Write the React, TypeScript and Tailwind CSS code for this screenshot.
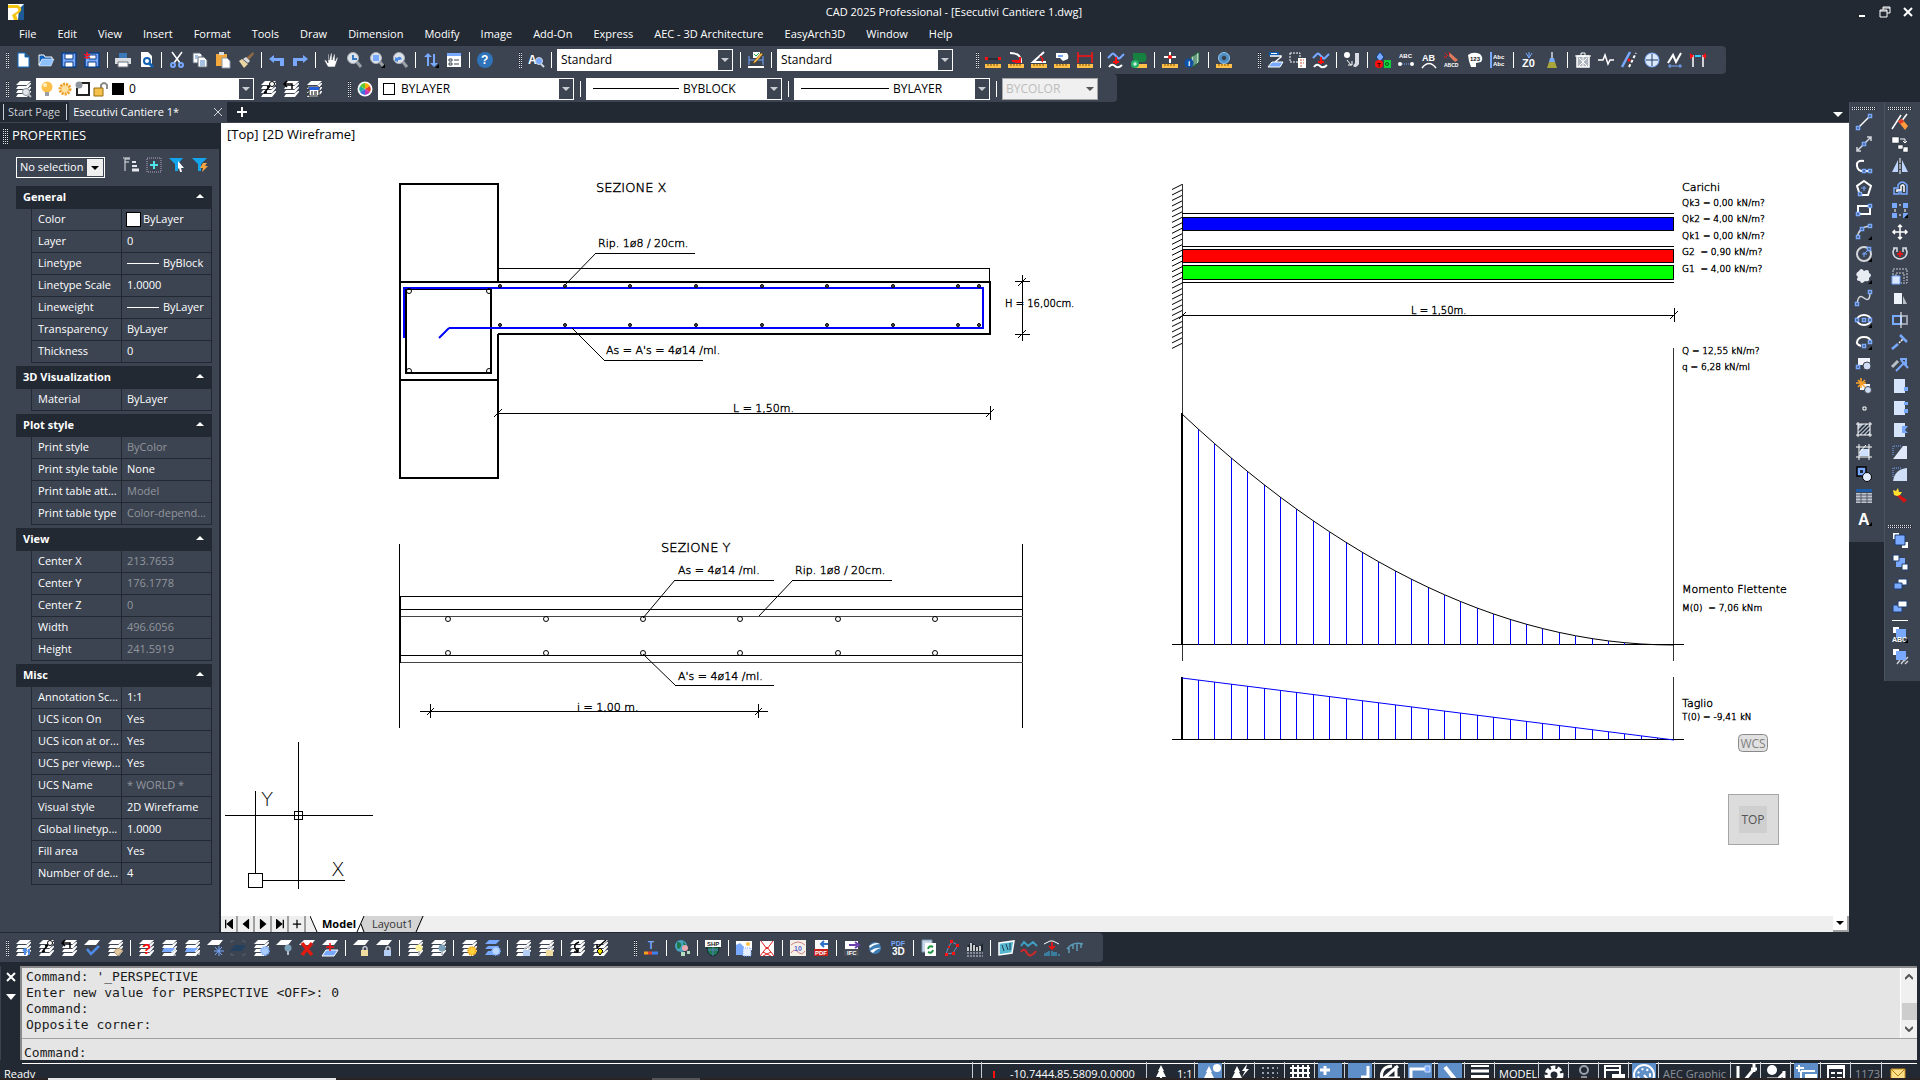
import React, { ReactNode } from "react";

const W = "#ffffff";
const B = "#78a9ff";
const Y = "#ffc04a";
const R = "#ff1010";

const ruler = (
  <>
    <path d="M0 12h16v4H0z" fill={Y} />
    <path d="M3 12v2M6 12v2M9 12v2M12 12v2" stroke="#7a5200" />
  </>
);

// stacked sheets, the base of all layer icons
const sheets = (
  <g fill={W}>
    <path d="M5 0h11l-4 4H1z" />
    <path d="M1 8l2-3h8l4-3h1v1l-4 5z" />
    <path d="M1 12l2-3h8l4-3h1v1l-4 5z" />
    <path d="M1 16l2-3h8l4-3h1v1l-4 5z" />
  </g>
);

const sheet = <path d="M5 0h11l-4 5H0z" fill={W} />;

const wave = (
  <>
    <path d="M0 6l4-4q1-1 2 0l4 4q1 1 2 0l4-4" stroke={B} strokeWidth="2" fill="none" />
    <path d="M1 15q3-4 6-1t7-1" stroke={W} strokeWidth="2" fill="none" />
    <path d="M8 5v7M5 10h6" stroke={R} strokeWidth="2" />
  </>
);

const lens = (
  <>
    <circle cx="7" cy="6" r="5.5" fill="#dfe4ea" stroke="#a9b0b8" />
    <path d="M11 10l4 5" stroke="#9aa0a6" strokeWidth="3" />
  </>
);

const bulb = (color: string) => (
  <>
    <circle cx="12" cy="8" r="3.5" fill={color} />
    <path d="M11 11h2v4h-2z" fill="#b8bec6" />
  </>
);

const lock = (color: string) => (
  <>
    <path d="M10 10V8q2-3 4 0v2" stroke="#c9ced6" strokeWidth="1.5" fill="none" />
    <path d="M8 10h7v6H8z" fill={color} />
  </>
);

const node = (x: number, y: number) => (
  <path d={`M${x - 1.5} ${y - 1.5}h3v3h-3z`} fill="#3c4452" stroke={B} strokeWidth="1.5" />
);

const more = <path d="M16 12v4h-4z" fill="#000" />;

const tiny = (text: string, x: number, y: number, fill = W, size = 7) => (
  <text x={x} y={y} fill={fill} fontSize={size} fontWeight="700" fontFamily="Liberation Sans, sans-serif">
    {text}
  </text>
);

const glyphs: Record<string, ReactNode> = {
  new: <path d="M3 1h7l4 4v10H3z M10 1v4h4" fill={W} stroke="#0f6cc4" />,
  open: (
    <>
      <path d="M1 3h5l1 2h7v3H4L1 13z" fill="#0f5fb8" stroke={W} />
      <path d="M4 7h12l-3 7H1z" fill="#8cc0ff" stroke={W} strokeWidth=".5" />
    </>
  ),
  save: (
    <>
      <path d="M1 1h14v14H1z" fill={B} stroke="#0c3f86" strokeWidth="1.5" />
      <path d="M4 2h8v5H4zM4 10h8v5H4z" fill={W} stroke="#0c3f86" />
    </>
  ),
  saveAs: (
    <>
      <path d="M1 1h14v14H1z" fill={B} stroke="#0c3f86" strokeWidth="1.5" />
      <path d="M5 3h7v4H5zM4 10h8v5H4z" fill={W} stroke="#0c3f86" />
      <path d="M3 0v7M0 2l6 4M6 2L0 6" stroke={R} strokeWidth="1.5" />
    </>
  ),
  print: (
    <>
      <path d="M4 1h8v5H4z" fill="#3b78b8" />
      <path d="M0 6h16v6H0z" fill="#d9dde2" />
      <path d="M3 10h10v5H3z" fill="#ffffff" stroke="#6c737c" />
    </>
  ),
  preview: (
    <>
      <path d="M3 0h7l4 4v11H3z" fill={W} />
      <circle cx="9" cy="9" r="3" fill="none" stroke="#1361b0" strokeWidth="2" />
      <path d="M11 11l4 4" stroke="#1361b0" strokeWidth="3" />
    </>
  ),
  cut: (
    <>
      <path d="M3 0l8 11M13 0L5 11" stroke={W} strokeWidth="1.5" />
      <circle cx="4" cy="13" r="2" fill="none" stroke={B} strokeWidth="2" />
      <circle cx="12" cy="13" r="2" fill="none" stroke={B} strokeWidth="2" />
    </>
  ),
  copy: (
    <>
      <path d="M1 1h7l2 2v8H1z" fill={W} stroke="#5c6675" />
      <path d="M6 5h6l3 3v7H6z" fill={W} stroke="#5c6675" />
      <path d="M8 9h5M8 11h5M8 13h5M3 4h3M3 6h2" stroke="#4b83c4" />
    </>
  ),
  paste: (
    <>
      <path d="M1 2h11v12H1z" fill="#f2a83b" />
      <path d="M4 0h5v3H4z" fill="#d8dce2" />
      <path d="M7 6h5l3 3v7H7z" fill={W} stroke="#8b97a8" />
    </>
  ),
  brush: (
    <>
      <path d="M15 0l1 2-5 6-3-2z" fill="#8f6a45" />
      <path d="M8 5l4 4-2 2-5-4z" fill="#d9dde2" />
      <path d="M4 7l6 5-4 4-5-7z" fill="#e8d3a2" />
    </>
  ),
  undo: <path d="M5 3L0 7l5 4V9h6v5h4V6H5z" fill={B} />,
  redo: <path d="M11 3l5 4-5 4V9H5v5H1V6h10z" fill={B} />,
  pan: <path d="M5 15L1 8l2 0 2 3V2h1v6L8 1h1v7l2-6h1v7l2-4 1 1-3 9z" fill={W} stroke="#39414d" strokeWidth=".6" />,
  zoom: (
    <>
      {lens}
      <path d="M7 3v4h4" stroke="#3578c4" strokeWidth="2" fill="none" />
    </>
  ),
  zoomWindow: (
    <>
      {lens}
      <path d="M4 3h6v6H4z" fill={B} />
      {more}
    </>
  ),
  zoomPrevious: (
    <>
      {lens}
      <path d="M3 9V5l2 1q3-3 5 1l-2 1-2 0 0 2z" fill="#4d8be6" />
    </>
  ),
  regen: (
    <>
      <path d="M5 1L1 5h3v9h2V5h3zM11 15l4-4h-3V2h-2v9H7z" fill={B} />
      {more}
    </>
  ),
  properties: (
    <>
      <path d="M1 1h14v14H1z" fill={W} />
      <path d="M1 1h14v3H1z" fill={B} />
      <path d="M3 7h3v2H3zM3 11h3v2H3zM8 8h5M8 12h5" stroke="#3c4452" fill="none" />
    </>
  ),
  help: (
    <>
      <circle cx="8" cy="8" r="8" fill="#2f73b8" />
      {tiny("?", 4, 12, W, 12)}
    </>
  ),
  textStyle: (
    <>
      {tiny("A", 0, 12, W, 12)}
      <circle cx="11" cy="9" r="3.5" fill={B} stroke="#cdd6e2" />
      <path d="M13 12l3 3" stroke="#cdd6e2" strokeWidth="2" />
    </>
  ),
  dimStyle: (
    <>
      <path d="M1 4v9M15 4v9M1 8h14" stroke={B} />
      <path d="M0 14h16v2H0z" fill={W} />
      <path d="M5 0h7v6H5z" fill={W} />
      <path d="M6 2l2 2 3-3" stroke="#12a84a" fill="none" />
      <path d="M15 2L8 10l-3 2 1-3 7-8z" fill={Y} stroke="#583400" strokeWidth=".5" />
    </>
  ),
  distance: (
    <>
      {ruler}
      <path d="M2 7h12" stroke="#161b22" />
      <path d="M0 5h3v3H0zM13 5h3v3h-3z" fill={R} />
    </>
  ),
  radius: (
    <>
      {ruler}
      <path d="M2 1q12 0 11 10" stroke={W} strokeWidth="2" fill="none" />
      <path d="M4 9h8M12 5v5H7" stroke={R} strokeWidth="2" fill="none" />
    </>
  ),
  angle: (
    <>
      {ruler}
      <path d="M13 0L2 10h13" stroke={W} strokeWidth="2" fill="none" />
      <path d="M9 4q4 3 2 6" stroke={R} strokeWidth="1.5" fill="none" />
    </>
  ),
  area: (
    <>
      {ruler}
      <path d="M2 1h11q2 2 1 6l-5 2-3-3H2z" fill={W} />
      <path d="M4 3h5v2H4z" fill={B} />
    </>
  ),
  extent: (
    <>
      {ruler}
      <path d="M1 0v11M15 0v11M1 4h14" stroke={R} strokeWidth="1.5" />
    </>
  ),
  wave,
  addArea: (
    <>
      <path d="M2 1h12q3 6 0 9H8L2 7z" fill="#17823f" />
      <path d="M4 12h12v4H4z" fill={Y} />
      <circle cx="4" cy="12" r="4" fill="#23b26a" />
      <path d="M4 10v4M2 12h4" stroke={W} />
    </>
  ),
  idPoint: (
    <>
      {ruler}
      <path d="M8 0v11M2 5h12" stroke={W} strokeWidth="2" />
      <circle cx="8" cy="5" r="2" fill={R} />
    </>
  ),
  massInfo: (
    <>
      <path d="M9 3l5-3v10l-5 5zM6 5l5-3v10l-4 3z" fill="#b9d9c6" stroke="#20603a" />
      <circle cx="4" cy="11" r="4.5" fill="#0d50a8" />
      {tiny("i", 3, 14, W, 8)}
    </>
  ),
  measure: (
    <>
      {ruler}
      <circle cx="8" cy="6" r="4" fill="none" stroke="#4f8fc4" strokeWidth="3.5" />
      <circle cx="8" cy="6" r="5.5" fill="none" stroke="#8fc2ea" />
    </>
  ),
  flatten: (
    <>
      <path d="M2 0h10v4H2z" fill="#0b5bb0" />
      <path d="M3 4h11v1L8 10" stroke={W} strokeWidth="1.5" fill="none" />
      <path d="M4 1h6v1H4z" fill={W} />
      <path d="M5 10h11l-3 5H1z" fill={B} stroke={W} />
    </>
  ),
  select: (
    <>
      <path d="M0 1h10v9H0z" fill="none" stroke={W} strokeDasharray="2 1" />
      <path d="M8 6h8v10H8z" fill={W} />
      <path d="M10 8h4M10 11h4M10 14h3" stroke="#d05a30" strokeDasharray="2 1" />
    </>
  ),
  move2: (
    <>
      <circle cx="3" cy="3" r="3" fill={W} />
      <path d="M3 8l4 5M4 13h4V9" stroke={W} fill="none" />
      <path d="M11 1h4v11q-3 5-6 2l2-3z" fill="#d8dce2" />
    </>
  ),
  blocks: (
    <>
      <path d="M5 0l4 5-4 5-4-5z" fill={B} stroke="#0c3f86" />
      <circle cx="4" cy="12" r="4" fill={R} />
      <path d="M9 8h7v8H9z" fill="#0fd03c" />
      {tiny("T", 2, 15, "#300", 6)}
      <circle cx="12" cy="12" r="1.5" fill="none" stroke="#052" />
    </>
  ),
  textFit: (
    <>
      {tiny("ABC", 1, 6, W, 6)}
      <circle cx="2" cy="12" r="2" fill={W} />
      <circle cx="14" cy="12" r="2" fill={W} />
      <path d="M4 12h8" stroke={B} strokeDasharray="1 1" />
    </>
  ),
  arcText: (
    <>
      {tiny("AB", 1, 9, W, 9)}
      <path d="M1 16q7-9 14 0" stroke={W} strokeWidth="1.5" fill="none" />
    </>
  ),
  explodeText: (
    <>
      <path d="M1 1l3 3M5 0l1 3M0 5h3" stroke={R} />
      <path d="M6 1l8 7-3 2-6-6z" fill="#e07a5c" />
      {tiny("ABCD", 0, 15, W, 5)}
    </>
  ),
  mask: (
    <>
      <path d="M1 3q5-4 12-1 4 4 1 8l-5 1v4H4L2 9z" fill={W} />
      {tiny("123", 3, 9, "#111", 6)}
    </>
  ),
  alignText: (
    <>
      <path d="M1 0v16" stroke={B} strokeWidth="2" />
      {tiny("Abc", 3, 7, W, 6)}
      {tiny("Abc", 3, 14, W, 6)}
    </>
  ),
  z0: (
    <>
      <path d="M8 0v6M5 1l3 5 3-5" stroke={B} fill="none" />
      {tiny("Z0", 1, 15, W, 11)}
    </>
  ),
  clean: (
    <>
      <path d="M8 0v6" stroke="#d8dce2" strokeWidth="1.5" />
      <path d="M6 6h4l1 4H5z" fill={B} />
      <path d="M5 10h6l2 6H3z" fill="#a8a63a" />
    </>
  ),
  purge: (
    <>
      <path d="M2 4h12v11H2z" fill="#aeb4bc" stroke={W} strokeWidth="1.5" />
      <path d="M0 4h16M6 1h4v3H6zM4 6l8 8M12 6l-8 8M8 5v10" stroke={W} fill="none" />
    </>
  ),
  breakLine: <path d="M0 8h5l2-5 3 9 2-4h4" stroke={W} strokeWidth="1.5" fill="none" />,
  parallel: (
    <>
      <path d="M1 15L9 0" stroke={B} strokeWidth="2.5" />
      <path d="M8 15l7-14" stroke={W} strokeWidth="2" strokeDasharray="3 2" />
      <circle cx="8" cy="8" r="1.5" fill={R} />
    </>
  ),
  target: (
    <>
      <circle cx="8" cy="8" r="7" fill="#dce9fb" stroke={B} />
      <path d="M8 2v12M2 8h12" stroke="#1d3a66" />
    </>
  ),
  polyEdit: (
    <>
      <path d="M1 11l5-8 3 7 5-9" stroke={W} strokeWidth="2" fill="none" />
      <path d="M1 14h14M3 12v4M13 12v4" stroke={B} />
    </>
  ),
  interval: (
    <>
      <path d="M3 3v12M13 3v12" stroke={W} strokeWidth="1.5" />
      <path d="M5 4h6" stroke="#35c9ff" strokeWidth="2" />
      <path d="M0 1l4 3-4 3zM16 1l-4 3 4 3z" fill={R} />
    </>
  ),
  layerList: (
    <>
      {sheets}
      <circle cx="11" cy="11" r="3.5" fill="#e3e7ec" stroke="#8b929c" />
      <path d="M13 13l3 3" stroke="#b9bfc8" strokeWidth="2" />
    </>
  ),
  layerMake: (
    <>
      {sheets}
      <path d="M4 12L10 5M10 5l-3 1M4 12l3-1" stroke="#000" strokeWidth="1.5" />
      <circle cx="12" cy="3" r="2.5" fill={W} stroke="#000" />
    </>
  ),
  layerPrev: (
    <>
      {sheets}
      <path d="M1 3h8v5M4 0L1 3l3 3" stroke="#000" strokeWidth="1.5" fill="none" />
    </>
  ),
  layerState: (
    <>
      {sheets}
      <path d="M3 6h10v9H3z" fill={W} stroke="#000" />
      <path d="M3 6h10v3H3z" fill="#245edb" />
      <path d="M5 11h2M8 11h3M5 13h2M8 13h3" stroke="#000" />
    </>
  ),
  colorWheel: (
    <>
      <circle cx="8" cy="8" r="7.5" fill={W} />
      <path d="M8 8V2a6 6 0 0 1 5 3z" fill="#ffb000" />
      <path d="M8 8l5-3a6 6 0 0 1 0 6z" fill="#e43b2c" />
      <path d="M8 8l5 3a6 6 0 0 1-5 3z" fill="#c238b8" />
      <path d="M8 8v6a6 6 0 0 1-5-3z" fill="#3f6fe0" />
      <path d="M8 8l-5 3a6 6 0 0 1 0-6z" fill="#21b0a0" />
      <path d="M8 8L3 5a6 6 0 0 1 5-3z" fill="#65c631" />
    </>
  ),
  layerFilter: (
    <>
      {sheets}
      <path d="M10 9v6M14 9v6M8 11l2-2 2 2" stroke="#4d8be6" strokeWidth="2" fill="none" />
    </>
  ),
  layerCheck: (
    <>
      {sheet}
      <path d="M3 9l4 5 8-8" stroke="#4d8be6" strokeWidth="2.5" fill="none" />
    </>
  ),
  layerMatch: (
    <>
      {sheets}
      <path d="M10 8l6 2-5 6-4-4z" fill="#e3c9a0" stroke="#7a5c34" strokeWidth=".6" />
    </>
  ),
  layerWhat: (
    <>
      {sheets}
      {tiny("?", 4, 14, R, 15)}
    </>
  ),
  layerIn: (
    <>
      {sheets}
      <path d="M3 8h11l-3 4H1z" fill={B} />
      <path d="M15 9l-4 5M11 11v4h4" stroke={W} fill="none" />
    </>
  ),
  layerOut: (
    <>
      {sheets}
      <path d="M3 8h11l-3 4H1z" fill={B} />
      <path d="M10 16l5-5M11 11h4v4" stroke={W} fill="none" />
    </>
  ),
  layerFreeze: (
    <>
      {sheet}
      <path d="M12 6v10M7 11h10M8 7l7 8M15 7l-7 8" stroke={B} />
    </>
  ),
  layerDim: (
    <>
      <path d="M1 3V1h3M15 3V1h-3M1 13v2h3M15 13v2h-3" stroke="#59616e" fill="none" />
      <path d="M5 5h11l-4 6H0z" fill="#24405f" />
    </>
  ),
  layerThaw: (
    <>
      {sheets}
      <circle cx="12" cy="11" r="4" fill="#a8ccff" stroke={B} strokeDasharray="1 1" strokeWidth="2" />
    </>
  ),
  layerOff: (
    <>
      {sheet}
      {bulb("#7ba2b8")}
    </>
  ),
  layerDelete: (
    <>
      {sheet}
      <path d="M3 3l10 12M13 3L3 15" stroke="#e01b10" strokeWidth="3.5" />
    </>
  ),
  layerMerge: (
    <>
      {sheet}
      <path d="M4 10h12l-4 6H0z" fill={B} stroke={W} />
      <path d="M8 3v8M4 7h8" stroke={R} strokeWidth="1.5" />
    </>
  ),
  layerLock: (
    <>
      {sheet}
      {lock("#f0dca0")}
    </>
  ),
  layerUnlock: (
    <>
      {sheet}
      {lock("#b4cdf5")}
    </>
  ),
  layersOn: (
    <>
      {sheets}
      {bulb("#fff3a0")}
    </>
  ),
  layersOff: (
    <>
      {sheets}
      {bulb("#7ba2b8")}
    </>
  ),
  layersSun: (
    <>
      {sheets}
      <circle cx="11" cy="11" r="4" fill="#ffd23c" stroke="#f39c12" strokeDasharray="1 1" strokeWidth="2" />
    </>
  ),
  layersIce: (
    <>
      <g fill={B}>
        <path d="M5 0h11l-4 4H1z" />
        <path d="M4 6h11l-3 3H1zM4 11h11l-3 4H1z" />
      </g>
      <circle cx="12" cy="11" r="4" fill="#bcd8ff" stroke={B} strokeDasharray="1 1" strokeWidth="2" />
    </>
  ),
  layersUnlock: (
    <>
      {sheets}
      {lock("#b4cdf5")}
    </>
  ),
  layersLock: (
    <>
      {sheets}
      {lock("#f0dca0")}
    </>
  ),
  layerUndo: (
    <>
      {sheets}
      <path d="M10 2q-8 3-1 10M9 12V8M9 12H5" stroke="#000" strokeWidth="1.5" fill="none" />
    </>
  ),
  layerWalk: (
    <>
      {sheets}
      <path d="M14 0L5 8M5 8V4" stroke="#000" strokeWidth="1.5" />
      <path d="M8 8l3 3-3 4-3-4z" fill="#f4e400" stroke="#000" />
    </>
  ),
  titleBlock: (
    <>
      {tiny("T", 5, 9, B, 10)}
      <path d="M1 13h4" stroke="#ff9d1c" strokeWidth="3" />
      <path d="M5 13h4" stroke="#e04030" strokeWidth="3" />
      <path d="M9 13h6" stroke="#3f7ff0" strokeWidth="3" />
    </>
  ),
  globe: (
    <>
      <circle cx="7" cy="6" r="6" fill="#4aa3c0" />
      <path d="M3 2q5 0 4 4t-4 2zM9 1l3 4-2 3z" fill="#1c7a4d" />
      <circle cx="11" cy="8" r="3" fill="#eba9b0" />
      <path d="M7 12h4v4H7zM13 11h3v3h-3z" fill="#b7ddc0" />
    </>
  ),
  shp: (
    <>
      <path d="M2 7h12q0 8-6 9-6-1-6-9z" fill="#1f7d55" stroke="#10262c" />
      <path d="M0 0h16v7H0z" fill={W} />
      {tiny("SHP", 2, 6, "#222", 6)}
      <path d="M3 10h10M8 7v9" stroke="#5a7cc0" />
    </>
  ),
  image: (
    <>
      <path d="M0 1h16v9H0z" fill={W} />
      <path d="M0 5l4-2 4 4v8H0z" fill={B} />
      <circle cx="12" cy="4" r="2" fill={Y} />
      <path d="M7 8h8v8H7z" fill="#e7f0ff" stroke={B} strokeDasharray="1 1" />
    </>
  ),
  clip: (
    <>
      <path d="M1 1h14v15H1z" fill={W} />
      <path d="M2 1l6 8 6-8M1 16l7-9 7 9M4 12l8 4M12 12l-8 4" stroke="#e02020" fill="none" />
    </>
  ),
  contour: (
    <>
      <path d="M0 0h16v16H0z" fill="#f4efe8" />
      <path d="M1 5q7-6 14 0M1 13q3-5 7-1t7-1" stroke="#d08080" fill="none" />
      {tiny("10", 4, 11, "#5a68d0", 7)}
    </>
  ),
  pdf: (
    <>
      <path d="M2 0h13v16H2z" fill={W} />
      <path d="M1 9h14v7H1z" fill="#c8201c" />
      {tiny("PDF", 2, 15, W, 6)}
      <path d="M15 4H9M11 1L8 4l3 3" stroke="#2d70c8" strokeWidth="2" fill="none" />
    </>
  ),
  ifc: (
    <>
      <path d="M1 1h13v15H1z" fill={W} />
      <path d="M0 9h15v7H0z" fill="#4a4f57" />
      {tiny("IFC", 3, 15, W, 6)}
      <path d="M5 5h8M11 2l4 3-4 3" stroke="#6d3fae" strokeWidth="2" fill="none" />
    </>
  ),
  earth: (
    <>
      <circle cx="8" cy="8" r="6" fill="#3d7db5" />
      <path d="M2 6q6-5 11-2-6 0-10 4zM3 11q6-4 11-3-5 1-8 5z" fill={W} />
    </>
  ),
  pdf3d: (
    <>
      {tiny("PDF", 1, 6, B, 7)}
      {tiny("3D", 2, 15, W, 10)}
    </>
  ),
  refresh: (
    <>
      <path d="M1 0h10v12H1z" fill="#c8d8e8" stroke="#7f98b0" />
      <path d="M4 3h11v13H4z" fill={W} />
      <path d="M12 7q-4-2-5 2M7 12q4 2 5-2" stroke="#1d9440" strokeWidth="2" fill="none" />
    </>
  ),
  nodes: (
    <>
      <path d="M2 14L5 6l3-4 6 3-5 8z" stroke="#6d8fb8" fill="none" />
      <path d="M1 13h3v3H1zM6 0h3v3H6zM12 4h3v3h-3zM8 12h3v3H8zM4 6h2v2H4z" fill={R} />
    </>
  ),
  profile: (
    <>
      <path d="M0 7l4-5 4 3 4 2 4-4v8H0z" fill="#1f262f" />
      <path d="M1 11V7M4 11V3M7 11V5M10 11V7M13 11V6" stroke={W} strokeWidth="1.5" />
      <path d="M0 13h16M0 16h16" stroke="#d0d5dc" strokeDasharray="2 1" />
    </>
  ),
  survey: (
    <>
      <path d="M1 3l15-2-2 12-13 2z" fill="#56b7cf" stroke={W} strokeWidth="1.5" />
      <path d="M4 5l2 6M8 4l2 6M12 3v7" stroke="#1c3f58" />
    </>
  ),
  sections: (
    <>
      <path d="M0 6l3-4 4 4 5-4 4 4" stroke="#3f9ec0" strokeWidth="2" fill="none" />
      <path d="M0 12q3-5 6 1t9-2" stroke="#d02828" strokeWidth="2" fill="none" />
    </>
  ),
  cutFill: (
    <>
      <path d="M0 4l6-3h3l6 3" stroke={W} fill="none" />
      <path d="M8 2v6M5 6l3 3 3-3" stroke={R} strokeWidth="1.5" fill="none" />
      <path d="M1 16v-3M3 16v-4M5 16v-5M8 16v-5M10 16v-4M12 16v-4M15 16v-2" stroke="#39b5e8" />
    </>
  ),
  slope: <path d="M0 9q6-8 16-5M2 8v5M6 5v4M10 4v7M14 4v4" stroke="#5d9cb8" strokeWidth="1.5" fill="none" />,
  line: (
    <>
      <path d="M2 14L14 2" stroke={W} strokeWidth="1.5" />
      {node(2, 14)}
      {node(14, 2)}
    </>
  ),
  xline: (
    <>
      <path d="M1 15L15 1M1 11v4h4M11 1h4v4" stroke="#d3d6da" strokeWidth="1.5" fill="none" />
      {node(8, 8)}
    </>
  ),
  polyline: (
    <>
      <path d="M8 3Q0 2 1 8t7 5h6" stroke={W} strokeWidth="2" fill="none" />
      {node(8, 13)}
      {node(14, 13)}
    </>
  ),
  polygon: (
    <>
      <path d="M8 1l7 5-3 9H4L1 6z" stroke={W} strokeWidth="2" fill="none" />
      <path d="M8 6v5M5 8h5" stroke={B} />
      {node(4, 14)}
    </>
  ),
  rectangle: (
    <>
      <path d="M2 4h12v8H2z" stroke={W} strokeWidth="2" fill="none" />
      {node(2, 12)}
      {node(14, 4)}
    </>
  ),
  arc: (
    <>
      <path d="M1 15Q2 3 14 2" stroke="#d3d6da" strokeWidth="1.5" fill="none" />
      {node(2, 13)}
      {node(6, 5)}
      {node(14, 2)}
      {more}
    </>
  ),
  circle: (
    <>
      <circle cx="8" cy="8" r="7" stroke="#d3d6da" strokeWidth="2" fill="none" />
      <path d="M8 8l4-4M6 8h5M8 6v5" stroke={B} />
      {node(13, 3)}
      {more}
    </>
  ),
  revcloud: (
    <>
      <path d="M3 3q2-4 5 0 5-3 5 2 4 2 0 5 1 4-4 3-4 4-5 0-5 0-2-4-4-3 1-6z" fill="#e7ebf2" />
      {more}
    </>
  ),
  spline: (
    <>
      <path d="M1 15Q2 3 8 8t6-6" stroke="#d3d6da" strokeWidth="1.5" fill="none" />
      {node(1, 14)}
      {node(14, 2)}
    </>
  ),
  ellipse: (
    <>
      <ellipse cx="8" cy="8" rx="7" ry="5" stroke={W} strokeWidth="2" fill="none" />
      {node(8, 8)}
      {node(1, 8)}
      {node(14, 8)}
      {more}
    </>
  ),
  ellipseArc: (
    <>
      <path d="M5 12Q0 10 1 8 2 3 8 3t7 5" stroke={W} strokeWidth="2" fill="none" />
      {node(8, 12)}
      {node(14, 8)}
      {more}
    </>
  ),
  block: (
    <>
      <path d="M2 2h12v7H2z" fill="#f1f5fb" />
      <circle cx="11" cy="10" r="4" fill="#cfdcf2" stroke="#3c4452" />
      {node(2, 11)}
    </>
  ),
  makeBlock: (
    <>
      <path d="M4 6h10v6H4z" fill="#f1f5fb" />
      <circle cx="12" cy="12" r="3.5" fill="#cfdcf2" stroke="#3c4452" />
      <path d="M5 0v10M0 5h10M2 2l7 7M9 2L2 9" stroke="#ffa227" strokeWidth="1.5" />
    </>
  ),
  point: <path d="M7 7h3v3H7z" fill="#3c4452" stroke={W} />,
  hatch: (
    <>
      <path d="M2 2h12v11H2z" fill="#aeb9c9" />
      <path d="M2 9l7-7M2 13L13 2M6 13l8-8M10 13l4-4" stroke="#222933" strokeWidth="1.5" />
      <path d="M0 2h16M0 13h16M2 0v15M14 0v15" stroke={W} />
    </>
  ),
  boundary: (
    <>
      <path d="M5 5h8v7H3z" fill="#cfe0ff" />
      <path d="M0 3h16M0 13h16M3 0v16M13 0v16M3 9l7-8" stroke={W} fill="none" />
    </>
  ),
  region: (
    <>
      <path d="M1 1h9v9H1z" fill={B} stroke="#000" strokeWidth="1.5" />
      <path d="M4 4h3v3H4z" fill="#222933" />
      <circle cx="11" cy="11" r="4.5" fill="#e3edff" stroke="#000" />
    </>
  ),
  table: (
    <>
      <path d="M0 1h16v3H0z" fill="#1f5ca8" />
      <path d="M0 5h16v10H0z" fill="#c4c9d1" />
      <path d="M0 7h16M0 10h16M0 13h16M5 4v11M11 4v11" stroke="#4f5866" />
    </>
  ),
  mtext: (
    <>
      {tiny("A", 2, 15, W, 16)}
      {more}
    </>
  ),
  erase: (
    <>
      <path d="M0 15L9 1M15 0L9 8" stroke={W} strokeWidth="1.5" />
      <path d="M6 7l4-2 6 7-3 4z" fill="#ff9b3a" />
      <path d="M6 7l4-2 2 3-4 2z" fill="#e23a2c" />
    </>
  ),
  copyObj: (
    <>
      <path d="M0 1h7v6H0zM6 9h5v4H6zM11 11h5v5h-5z" fill={W} stroke="#222933" strokeWidth=".5" />
      <path d="M8 3h5v4M11 5l2 2 2-2" stroke={W} fill="none" />
    </>
  ),
  mirror: (
    <>
      <path d="M6 2v12H0zM10 2v12h6z" fill="#bcd4ff" />
      <path d="M8 0v16" stroke={W} strokeDasharray="5 1" />
    </>
  ),
  offset: (
    <>
      <path d="M2 14V8h4V5q4-6 9 0v9H9v-3H7v3z" stroke={B} strokeWidth="1.5" fill="none" />
      <path d="M5 12v-2h4V6q2-2 3 0v6" stroke={W} strokeWidth="1.5" fill="none" />
    </>
  ),
  array: (
    <>
      <path d="M0 1h5v5H0zM11 1h5v5h-5zM0 11h5v5H0zM11 11h5v5h-5z" fill={B} />
      <path d="M7 3h2M7 13h2M3 7v3M13 7v3" stroke={W} />
      {more}
    </>
  ),
  move: <path d="M8 1v14M1 8h14M6 3l2-2 2 2M6 13l2 2 2-2M3 6L1 8l2 2M13 6l2 2-2 2" stroke={W} strokeWidth="1.5" fill="none" />,
  rotate: (
    <>
      <path d="M3 2q-4 4 0 9 5 4 10 0 4-5 0-9M1 2h4v4M15 2h-4v4" stroke="#d8dce2" strokeWidth="1.5" fill="none" />
      <path d="M8 5v6M5 8h6" stroke={R} strokeWidth="1.5" />
    </>
  ),
  scale: (
    <>
      <path d="M1 7V1h14v14H9M4 8V5h8v8" stroke="#c8ccd2" strokeDasharray="2 1" fill="none" />
      <path d="M0 8h8v8H0z" fill="#dbe8ff" stroke={B} />
    </>
  ),
  stretch: (
    <>
      <path d="M2 3h8v11H2z" fill="#eef3fb" />
      <path d="M11 6l4 8h-4z" fill="#b8bec6" />
    </>
  ),
  trim: (
    <>
      <path d="M1 4h8v8H1z" stroke={B} strokeWidth="2" fill="none" />
      <path d="M9 4h6v8H9" stroke="#9aa1ab" strokeWidth="2" fill="none" />
      <path d="M9 0v16" stroke={W} />
    </>
  ),
  extend: (
    <>
      <path d="M0 15l6-5M8 1l7 7" stroke={B} strokeWidth="2.5" />
      <path d="M7 9l4-4" stroke={W} strokeDasharray="2 1" strokeWidth="1.5" />
    </>
  ),
  lengthen: (
    <>
      <path d="M0 11l6-6" stroke="#b8bec6" strokeWidth="3" />
      <path d="M4 15L13 6M8 3h6v6M9 4l7 8" stroke={B} strokeWidth="2" fill="none" />
    </>
  ),
  breakAt: (
    <>
      <path d="M2 1h11v14H2z" fill="#d6e5fb" />
      <path d="M12 9h4v4h-4z" fill={B} />
    </>
  ),
  breakTwo: (
    <>
      <path d="M2 1h11v14H2z" fill="#d6e5fb" />
      <path d="M12 2h4v3h-4zM12 9h4v4h-4z" fill={B} />
    </>
  ),
  join: (
    <>
      <path d="M2 1h11v14H2z" fill="#d6e5fb" />
      <path d="M10 4h6l-3 4 3 3h-6z" fill={B} />
    </>
  ),
  chamfer: (
    <>
      <path d="M1 15L11 2h4v13z" fill="#dfe9fa" />
      <path d="M1 11V2h9" stroke={B} strokeDasharray="1 1" fill="none" />
    </>
  ),
  fillet: (
    <>
      <path d="M1 15Q3 3 15 2v13z" fill="#cfdff8" />
      <path d="M1 11V2h9" stroke={B} strokeDasharray="1 1" fill="none" />
    </>
  ),
  explode: (
    <>
      <path d="M5 5l10 7-3 3-8-8z" fill="#d21414" />
      <path d="M1 2l3 1 2-3 1 4 3 0-2 3-3 1-3-1z" fill="#ffe12e" />
    </>
  ),
  orderFront: (
    <>
      <path d="M1 1h6v6H1zM10 10h6v6h-6z" fill={W} />
      <path d="M3 3h10v10H3z" fill={B} stroke="#1f3d70" />
    </>
  ),
  orderBack: (
    <>
      <path d="M4 4h9v9H4z" fill={B} />
      <path d="M1 1h6v6H1zM10 10h6v6h-6z" fill={W} stroke="#1f3d70" />
    </>
  ),
  orderAbove: (
    <>
      <path d="M6 3h9v6H6z" fill={W} stroke="#1f3d70" />
      <path d="M2 7h8v6H2z" fill={B} stroke="#1f3d70" />
    </>
  ),
  orderUnder: (
    <>
      <path d="M1 7h9v7H1z" fill={B} stroke="#1f3d70" />
      <path d="M6 3h9v6H6z" fill={W} stroke="#1f3d70" />
    </>
  ),
  orderText: (
    <>
      <path d="M1 0h6v6H1z" fill={W} />
      <path d="M4 2h10v9H4z" fill={B} />
      {tiny("ABC", 0, 15, W, 7)}
      {more}
    </>
  ),
  orderHatch: (
    <>
      <path d="M1 0h6v6H1z" fill={W} />
      <path d="M5 15l3-4M9 15l3-4M12 12l4-4M13 15l3-3" stroke="#c8ccd2" strokeWidth="1.5" />
      <path d="M4 2h10v9H4z" fill={B} />
    </>
  ),
  tree: (
    <>
      <path d="M0 1h7M2 2v12M2 5h4M2 2h5" stroke="#e4e7eb" fill="none" />
      <path d="M9 5h4M9 9h5" stroke="#e4e7eb" strokeWidth="2" />
      <path d="M9 13h7" stroke="#e4e7eb" strokeWidth="3" />
    </>
  ),
  addSel: (
    <>
      <path d="M1 1h14v14H1z" fill="none" stroke="#b9a3c8" strokeDasharray="1 1" />
      <path d="M8 4v8M4 8h8" stroke="#4fe3e8" strokeWidth="2" />
    </>
  ),
  pickFilter: (
    <>
      <path d="M0 1h14L9 7v7H6V7z" fill="#12a5ec" />
      <path d="M9 4l6 7h-3l1 4h-2l-1-4-1 1z" fill={W} />
    </>
  ),
  quickFilter: (
    <>
      <path d="M0 1h15L9 7v7H6V7z" fill="#12a5ec" />
      <path d="M11 6h4l-2 3h3l-6 6 1-4H8z" fill="#f5a440" />
    </>
  ),
  bulbOn: (
    <>
      <circle cx="8" cy="6" r="5.5" fill={Y} />
      <circle cx="6" cy="4" r="2" fill="#fff0c0" />
      <path d="M6 11h4v4H6z" fill="#9aa0a6" />
    </>
  ),
  sun: <circle cx="8" cy="8" r="5" fill="#ffe2a0" stroke="#eda02c" strokeWidth="3" strokeDasharray="2 1" />,
  viewport: (
    <>
      <path d="M5 2h9v12H2V7" fill={W} stroke="#222" strokeWidth="2" />
      <circle cx="4" cy="4" r="3.5" fill="#8f959d" />
    </>
  ),
  padlock: (
    <>
      <path d="M8 8V4q3-4 6 0v4" stroke="#8a8a8a" strokeWidth="2" fill="none" />
      <path d="M1 7h9v8H1z" fill="#f3c14c" stroke="#9a6c10" />
    </>
  ),
};

const statusGlyphs: Record<string, ReactNode> = {
  ucs: <path d="M4 19h16M12 8v11" stroke={R} strokeWidth="2" />,
  scale: <path d="M12 2l3 6-1 0 3 6h-4v4h-2v-4H7l3-6-1 0z" fill={W} />,
  annoVisible: (
    <>
      <path d="M11 3l3 6-1 0 3 6h-4v4h-2v-4H6l3-6-1 0z" fill={W} />
      <circle cx="19" cy="5" r="4" fill={W} />
    </>
  ),
  annoAuto: <path d="M9 3l3 6-1 0 3 6H10v4H8v-4H4l3-6-1 0zM19 1l-5 7h3l-3 6 7-8h-3z" fill={W} />,
  snap: <path d="M4 5h16M4 10h16M4 15h16" stroke="#9aa1ab" strokeWidth="2" strokeDasharray="2 3" />,
  grid: <path d="M2 5h20M2 10h20M2 15h20M5 2v20M10 2v20M15 2v20M20 2v20" stroke={W} strokeWidth="2" />,
  infer: <path d="M7 3v9M2 7h10" stroke={W} strokeWidth="3" />,
  ortho: <path d="M13 14h7V3" stroke={W} strokeWidth="3" fill="none" />,
  polar: <path d="M20 3L6 15h16M18 3v18M4 18Q1 4 14 3" stroke={W} strokeWidth="3" fill="none" />,
  osnap: (
    <>
      <path d="M3 20V6h14" stroke={W} strokeWidth="3" fill="none" />
      <path d="M17 3h5v6h-5z" fill={B} stroke="#cfe0ff" />
    </>
  ),
  otrack: <path d="M7 4l12 15" stroke={W} strokeWidth="4" />,
  lineweight: (
    <>
      <path d="M3 3h18" stroke={W} strokeWidth="2" />
      <path d="M3 8h18" stroke={W} strokeWidth="3" />
      <path d="M3 14h18" stroke={W} strokeWidth="4" />
    </>
  ),
  gear: (
    <>
      <circle cx="12" cy="12" r="7" stroke={W} strokeWidth="5" strokeDasharray="4 2" fill="none" />
      <circle cx="12" cy="12" r="5" stroke={W} strokeWidth="3" fill="none" />
    </>
  ),
  light: (
    <>
      <circle cx="12" cy="7" r="4" stroke="#9aa1ab" strokeWidth="2" fill="none" />
      <path d="M9 13h6v6H9z" fill="#8a9099" />
    </>
  ),
  windows: (
    <>
      <path d="M3 3h15v13H3zM3 7h15" stroke={W} strokeWidth="2" fill="none" />
      <path d="M10 11h13v6H10z" fill={W} />
    </>
  ),
  gauge: (
    <>
      <circle cx="12" cy="12" r="10" stroke={W} strokeWidth="2" fill="none" />
      <circle cx="12" cy="12" r="6" stroke={W} strokeWidth="2" strokeDasharray="2 3" fill="none" />
      <path d="M12 12l7 8" stroke={W} strokeWidth="2" />
    </>
  ),
  track: <path d="M4 3v16M10 18L20 6M20 1v8M17 6h6" stroke={W} strokeWidth="3" fill="none" />,
  person: (
    <>
      <circle cx="8" cy="7" r="5" fill={W} />
      <path d="M3 16h10M12 18l8-8M20 8v12" stroke={W} strokeWidth="3" />
    </>
  ),
  cascade: (
    <>
      <path d="M2 5h8M5 2v7M7 8h14M7 8v12" stroke={W} strokeWidth="2" fill="none" />
      <path d="M11 11h12v8H11z" fill={W} />
    </>
  ),
  list: (
    <>
      <path d="M4 3h16v18H4zM4 5h16" stroke={W} strokeWidth="2" fill="none" />
      <path d="M7 10h4M7 15h4M13 10h5M13 15h5" stroke={W} strokeWidth="2" />
    </>
  ),
  mail: (
    <>
      <path d="M5 6h14v12H5z" fill="#ffe08a" stroke="#c98f1c" />
      <path d="M5 6l7 7 7-7" stroke="#b87d10" fill="none" />
    </>
  ),
};

function Icon({ name, className = "size-4" }: { name: string; className?: string }) {
  return (
    <svg viewBox="0 0 16 16" className={`overflow-visible ${className}`} aria-hidden="true">
      {glyphs[name]}
    </svg>
  );
}

function Tools({ items }: { items: string }) {
  return (
    <>
      {items.split(" ").map(function (name, i) {
        if (name === "|") return <Divider key={i} />;
        return (
          <button key={i} aria-label={name} className="flex h-6 w-[23px] shrink-0 items-center justify-center">
            <Icon name={name} />
          </button>
        );
      })}
    </>
  );
}

function Divider() {
  return (
    <div className="flex w-2 shrink-0 justify-center">
      <div className="h-4 w-px bg-white" />
    </div>
  );
}

const dotsDown = "h-4 w-px bg-[repeating-linear-gradient(0deg,#e5e7ea_0_1px,#1a2028_1px_2px)]";
const dotsAcross = "h-px w-6 bg-[repeating-linear-gradient(90deg,#e5e7ea_0_1px,#1a2028_1px_2px)]";

function Handle() {
  return (
    <div className="flex w-[11px] shrink-0 justify-end gap-px pr-0.5">
      <div className={dotsDown} />
      <div className={dotsDown} />
    </div>
  );
}

function Arrow({ className }: { className?: string }) {
  return (
    <svg viewBox="0 0 8 4" className={`h-1 w-2 ${className}`}>
      <path d="M0 0h8L4 4z" fill="currentColor" />
    </svg>
  );
}

type ComboProps = {
  label: string;
  value: string;
  width: string;
  children?: ReactNode;
  pad?: string;
  disabled?: boolean;
};

function Combo({ label, value, width, children, pad = "pl-[3px]", disabled }: ComboProps) {
  return (
    <div
      className={`relative flex h-[22px] shrink-0 items-center border ${width} ${
        disabled ? "border-[#a8a8a8] bg-[#f0f0f0]" : "border-white bg-white"
      }`}
    >
      <div className="pointer-events-none absolute left-1 flex h-full items-center">{children}</div>
      <select
        aria-label={label}
        disabled={disabled}
        className={`h-full w-full appearance-none text-[12px] ${pad} ${disabled ? "text-[#bdbdbd]" : "text-black"}`}
      >
        <option>{value}</option>
      </select>
      <span
        className={`pointer-events-none absolute top-0 right-0 flex h-full w-[14px] items-center justify-center ${
          disabled ? "text-[#555]" : "bg-[#3c4452] text-[#c9cdd3]"
        }`}
      >
        <Arrow className="w-1.5" />
      </span>
    </div>
  );
}

const menus = [
  "File", "Edit", "View", "Insert", "Format", "Tools", "Draw", "Dimension", "Modify", "Image",
  "Add-On", "Express", "AEC - 3D Architecture", "EasyArch3D", "Window", "Help",
];

function TitleBar() {
  return (
    <header>
      <div className="relative flex h-6 items-center px-2">
        <svg viewBox="0 0 16 16" className="size-4">
          <path d="M0 0h16v16H0z" fill={W} />
          <path d="M11 5l5-5v16h-6z" fill="#1c5a96" />
          <path d="M0 4V1h10q6 4 1 8l-3 2 2 5H6L4 11l6-4q1-2-1-3z" fill="#f5c518" />
        </svg>
        <h1 className="flex-1 pr-7 text-center text-[11px] text-white">
          CAD 2025 Professional - [Esecutivi Cantiere 1.dwg]
        </h1>
        <div className="absolute right-1.5 flex items-center gap-[11px] text-white">
          <button aria-label="Minimize" className="flex h-3 w-3 items-end justify-center">
            <span className="mb-px h-0.5 w-1.5 bg-white" />
          </button>
          <button aria-label="Restore">
            <svg viewBox="0 0 12 12" className="size-3">
              <path d="M4 4V1h7v6H8M1 4h7v7H1zM1 5h7M4 2h7" stroke={W} fill="none" />
            </svg>
          </button>
          <button aria-label="Close">
            <svg viewBox="0 0 12 12" className="size-3">
              <path d="M2 2l8 8M10 2l-8 8" stroke={W} strokeWidth="2" />
            </svg>
          </button>
        </div>
      </div>
      <nav className="flex h-[22px] items-center gap-[21px] pb-0.5 pl-[19px] text-[11px] text-white">
        {menus.map(function (menu) {
          return <button key={menu}>{menu}</button>;
        })}
      </nav>
    </header>
  );
}

function TopToolbars() {
  return (
    <>
      <div className="flex h-7 w-fit items-center rounded-r-sm bg-[#3c4452] pr-[17px]">
        <Handle />
        <Tools items="new open save saveAs | print preview | cut copy paste brush | undo redo | pan zoom zoomWindow zoomPrevious | regen properties | help" />
        <div className="w-[17px]" />
        <Handle />
        <Tools items="textStyle |" />
        <div className="w-0.5" />
        <Combo label="Text style" value="Standard" width="w-[176px]" />
        <div className="w-[3px]" />
        <Tools items="| dimStyle |" />
        <div className="w-0.5" />
        <Combo label="Dimension style" value="Standard" width="w-[176px]" />
        <div className="w-[17px]" />
        <Handle />
        <Tools items="distance radius angle area extent | wave addArea | idPoint massInfo | measure" />
        <div className="w-[17px]" />
        <Handle />
        <Tools items="flatten select wave | move2 | blocks textFit arcText explodeText mask alignText | z0 clean | purge breakLine parallel target polyEdit interval" />
      </div>
      <div className="flex h-7 w-fit items-center rounded-r-sm bg-[#3c4452] pt-px pr-[19px]">
        <Handle />
        <Tools items="layerList" />
        <div className="w-0.5" />
        <Combo label="Layer" value="0" width="w-[218px]" pad="pl-[92px]">
          <div className="-ml-0.5 flex gap-0.5">
            <Icon name="bulbOn" />
            <Icon name="sun" />
            <Icon name="viewport" />
            <Icon name="padlock" />
            <span className="ml-px size-3 self-center bg-black" />
          </div>
        </Combo>
        <div className="w-0.5" />
        <Tools items="layerMake layerPrev layerState" />
        <div className="w-[17px]" />
        <Handle />
        <Tools items="colorWheel" />
        <div className="w-0.5" />
        <Combo label="Color" value="BYLAYER" width="w-[196px]" pad="pl-[22px]">
          <span className="size-3 border border-black" />
        </Combo>
        <div className="w-0.5" />
        <Divider />
        <div className="w-0.5" />
        <Combo label="Linetype" value="BYBLOCK" width="w-[196px]" pad="pl-[96px]">
          <span className="ml-0.5 h-px w-[86px] bg-black" />
        </Combo>
        <div className="w-0.5" />
        <Divider />
        <div className="w-0.5" />
        <Combo label="Lineweight" value="BYLAYER" width="w-[196px]" pad="pl-[98px]">
          <span className="ml-0.5 h-px w-[88px] bg-black" />
        </Combo>
        <div className="w-0.5" />
        <Divider />
        <div className="w-0.5" />
        <Combo label="Plot style" value="BYCOLOR" width="w-24" disabled />
      </div>
    </>
  );
}

function DocumentTabs() {
  return (
    <div className="flex h-[21px] items-center border-b border-[#3c4452] pl-[3px] text-[11px]">
      <button className="flex h-4 items-center border-x border-[#c9cdd3] pr-1.5 pl-1 text-[#c9cdd3]">Start Page</button>
      <div className="ml-0.5 flex h-full w-[158px] items-center bg-[#3c4452] pr-1 pl-1 text-white">
        <button className="flex-1 text-left">Esecutivi Cantiere 1*</button>
        <button aria-label="Close tab">
          <svg viewBox="0 0 10 10" className="size-2.5">
            <path d="M1 1l8 8M9 1L1 9" stroke="#d5d8dc" />
          </svg>
        </button>
      </div>
      <button aria-label="New tab" className="ml-2.5">
        <svg viewBox="0 0 10 10" className="size-2.5">
          <path d="M5 0v10M0 5h10" stroke={W} strokeWidth="2" />
        </svg>
      </button>
      <button aria-label="Tab list" className="mr-1.5 ml-auto pt-1">
        <svg viewBox="0 0 10 10" className="size-2.5">
          <path d="M0 3h10L5 8z" fill={W} />
        </svg>
      </button>
    </div>
  );
}

type Row = { name: string; value: string; muted?: boolean; swatch?: "box" | "line" };

const groups: { title: string; rows: Row[] }[] = [
  {
    title: "General",
    rows: [
      { name: "Color", value: "ByLayer", swatch: "box" },
      { name: "Layer", value: "0" },
      { name: "Linetype", value: "ByBlock", swatch: "line" },
      { name: "Linetype Scale", value: "1.0000" },
      { name: "Lineweight", value: "ByLayer", swatch: "line" },
      { name: "Transparency", value: "ByLayer" },
      { name: "Thickness", value: "0" },
    ],
  },
  { title: "3D Visualization", rows: [{ name: "Material", value: "ByLayer" }] },
  {
    title: "Plot style",
    rows: [
      { name: "Print style", value: "ByColor", muted: true },
      { name: "Print style table", value: "None" },
      { name: "Print table att...", value: "Model", muted: true },
      { name: "Print table type", value: "Color-depend...", muted: true },
    ],
  },
  {
    title: "View",
    rows: [
      { name: "Center X", value: "213.7653", muted: true },
      { name: "Center Y", value: "176.1778", muted: true },
      { name: "Center Z", value: "0", muted: true },
      { name: "Width", value: "496.6056", muted: true },
      { name: "Height", value: "241.5919", muted: true },
    ],
  },
  {
    title: "Misc",
    rows: [
      { name: "Annotation Sc...", value: "1:1" },
      { name: "UCS icon On", value: "Yes" },
      { name: "UCS icon at or...", value: "Yes" },
      { name: "UCS per viewp...", value: "Yes" },
      { name: "UCS Name", value: "* WORLD *", muted: true },
      { name: "Visual style", value: "2D Wireframe" },
      { name: "Global linetyp...", value: "1.0000" },
      { name: "Fill area", value: "Yes" },
      { name: "Number of de...", value: "4" },
    ],
  },
];

function PropertiesPanel() {
  return (
    <aside className="w-[221px] shrink-0 border-r-2 border-[#222933] bg-[#3c4452] text-[11px] text-white">
      <div className="flex h-[26px] items-center bg-[#222933] pl-[3px]">
        <div className="flex gap-px">
          <div className={dotsDown} />
          <div className={dotsDown} />
          <div className={dotsDown} />
        </div>
        <h2 className="ml-1 text-[13px]">PROPERTIES</h2>
      </div>
      <div className="flex h-[29px] items-start pt-2 pr-2 pl-4">
        <div className="relative h-[21px] w-[90px] border border-white">
          <select aria-label="Selection" className="h-full w-full appearance-none pl-[3px] text-[11px]">
            <option>No selection</option>
          </select>
          <span className="pointer-events-none absolute top-px right-px flex h-[17px] w-4 items-center justify-center bg-[#efefef] text-black">
            <Arrow />
          </span>
        </div>
        <div className="-mt-1 ml-[14px] flex">
          <Tools items="tree addSel pickFilter quickFilter" />
        </div>
      </div>
      <div className="flex flex-col gap-[3px] pt-2 pr-[7px] pl-4">
        {groups.map(function (group) {
          return (
            <section key={group.title}>
              <button className="flex h-[23px] w-full items-center justify-between bg-[#222933] pr-2 pl-[7px] font-bold">
                {group.title}
                <svg viewBox="0 0 8 4" className="mb-1 h-1 w-2">
                  <path d="M0 4h8L4 0z" fill={W} />
                </svg>
              </button>
              <table className="-mt-px ml-[15px] w-[181px] table-fixed border-collapse">
                <tbody>
                  {group.rows.map(function (row) {
                    return (
                      <tr key={row.name} className="h-[22px]">
                        <th className="border border-[#222933] p-0 pl-1.5 text-left font-normal whitespace-nowrap">
                          {row.name}
                        </th>
                        <td
                          className={`border border-[#222933] p-0 pl-[5px] whitespace-nowrap ${
                            row.muted ? "text-[#92969c]" : ""
                          }`}
                        >
                          <div className="flex items-center">
                            {row.swatch === "box" && (
                              <span className="mr-0.5 -ml-px size-[15px] border border-black bg-white" />
                            )}
                            {row.swatch === "line" && <span className="mr-1 h-px w-8 bg-white" />}
                            {row.value}
                          </div>
                        </td>
                      </tr>
                    );
                  })}
                </tbody>
              </table>
            </section>
          );
        })}
      </div>
    </aside>
  );
}

const barXs = [500, 565, 630, 696, 762, 827, 893, 958, 979];
const rebarXs = [448, 546, 643, 740, 838, 935];
const steps = Array.from({ length: 29 }, (_, i) => i + 1);
const spanX = (i: number) => 1182 + (i * 492) / 30;
const momentY = (i: number) => 645 - 231 * Math.pow(1 - i / 30, 2);
const shearY = (i: number) => 678 + (i * 62) / 30;

const momentCurve = Array.from({ length: 31 }, (_, i) => `${spanX(i)},${momentY(i)}`).join(" ");

const labels: [string, number, number, number][] = [
  ["SEZIONE X", 596, 192, 13],
  ["Rip. 1ø8 / 20cm.", 598, 247, 11],
  ["As = A's = 4ø14 /ml.", 606, 354, 11],
  ["L = 1,50m.", 733, 412, 11],
  ["H = 16,00cm.", 1005, 307, 10],
  ["SEZIONE Y", 661, 552, 13],
  ["As = 4ø14 /ml.", 678, 574, 11],
  ["Rip. 1ø8 / 20cm.", 795, 574, 11],
  ["A's = 4ø14 /ml.", 678, 680, 11],
  ["i = 1,00 m.", 577, 711, 11],
  ["L = 1,50m.", 1411, 314, 10],
  ["Carichi", 1682, 191, 11],
  ["Qk3 = 0,00 kN/m?", 1682, 206, 9],
  ["Qk2 = 4,00 kN/m?", 1682, 222, 9],
  ["Qk1 = 0,00 kN/m?", 1682, 239, 9],
  ["G2  = 0,90 kN/m?", 1682, 255, 9],
  ["G1  = 4,00 kN/m?", 1682, 272, 9],
  ["Q = 12,55 kN/m?", 1682, 354, 9],
  ["q = 6,28 kN/ml", 1682, 370, 9],
  ["Momento Flettente", 1682, 593, 11],
  ["M(0)  = 7,06 kNm", 1682, 611, 9],
  ["Taglio", 1682, 707, 11],
  ["T(0) = -9,41 kN", 1682, 720, 9],
];

// model space, one unit is one pixel at 100%
function Drawing() {
  return (
    <svg viewBox="221 123 1628 793" preserveAspectRatio="xMinYMin meet" className="absolute inset-0 h-full w-full">
      <g fill="none" stroke="#000" shapeRendering="crispEdges">
        <path d="M498 281V184H400V478H498V334" strokeWidth="2" />
        <path d="M400 282H990V334H498M400 380H498" strokeWidth="2" />
        <path d="M498.500 268.500H989.500V281" />
        <path d="M406 289H491V373H406z" strokeWidth="2" />
        <path d="M404 338V288H983V328H449" stroke="#00f" strokeWidth="2" />
        <path d="M596 253.500H695M604 360.500H703M498 413.500H990M990.500 406v14" />
        <path d="M1022.500 275V341M1015 281.500h15M1015 334.500h15" />
        <path d="M399.500 544V728M1022.500 544V728" />
        <path d="M399 596.500H1023M399 655.500H1023M399 609.500H1023" strokeWidth="1" />
        <path d="M399 616.500H1023M399 662.500H1023" stroke="#444" />
        <path d="M400 596V663" strokeWidth="2" />
        <path d="M675 580.500H774M793 580.500H892M675 685.500H774" />
        <path d="M420 711.500H768M430.500 704v14M758.500 704v14" />
        <path d="M1182.500 184V661M1673.500 348V661M1673.500 677V740" stroke="#333" />
        <path d="M1182 413V645M1182 677V740" strokeWidth="2" />
        <path d="M1182 213.500H1674M1182 246.500H1674M1182 282.500H1674" />
        <path d="M1182.500 217.500H1673.500V230.500H1182.500z" fill="#00f" />
        <path d="M1182.500 249.500H1673.500V262.500H1182.500z" fill="#f00" />
        <path d="M1182.500 265.500H1673.500V279.500H1182.500z" fill="#0f0" />
        <path d="M1182 315.500H1674M1674.500 308v14" />
        <path d="M1172 644.500H1684M1172 739.500H1684" />
        {steps.map(function (i) {
          return (
            <path
              key={i}
              d={`M${spanX(i)} ${momentY(i)}V645M${spanX(i)} ${shearY(i)}V739`}
              stroke="#00f"
            />
          );
        })}
      </g>
      <g fill="none" stroke="#000">
        <path d="M449 328l-10 10" stroke="#00f" strokeWidth="2" />
        <path d="M565 285L596 253M572 328L604 360M494 417l8-8M986 417l8-8M1018 286l8-8M1018 338l8-8" />
        <path d="M643 618L675 580M759 616L793 580M643 654L675 685M427 715l7-7M755 715l7-7" />
        <path d="M1670 319l8-8M1179 319l7-7" />
        <polyline points={momentCurve} />
        <path d="M1182 678L1674 740" stroke="#00f" />
        {Array.from({ length: 30 }, (_, i) => (
          <path key={i} d={`M1172 ${189.5 + i * 5.48}l10 -5`} />
        ))}
        {[409, 489].map((x) => (
          <g key={x}>
            <circle cx={x} cy="291" r="2.500" />
            <circle cx={x} cy="371" r="2.500" />
          </g>
        ))}
        {barXs.map((x) => (
          <g key={x} fill="#555">
            <circle cx={x} cy="286" r="1.500" />
            <circle cx={x} cy="325" r="1.500" />
          </g>
        ))}
        {rebarXs.map((x) => (
          <g key={x}>
            <circle cx={x} cy="619" r="2.500" />
            <circle cx={x} cy="653" r="2.500" />
          </g>
        ))}
      </g>
      <g fill="#000" stroke="#000" strokeWidth=".4" fontFamily="DejaVu Sans, sans-serif">
        {labels.map(function ([text, x, y, size]) {
          return (
            <text key={`${x}-${y}`} x={x} y={y} fontSize={size} fontWeight="200" className="whitespace-pre">
              {text}
            </text>
          );
        })}
      </g>

      <g stroke="#000" fill="none" shapeRendering="crispEdges">
        <path d="M298.500 742V889M225 815.500H373M294.500 811.500h8v8h-8z" />
        <path d="M255.500 791V873M262 880.500H345M248.500 873.500h14v14h-14z" />
      </g>
      <g fill="#000" fontFamily="DejaVu Sans, sans-serif" fontWeight="200" fontSize="20">
        <text x="261" y="806">Y</text>
        <text x="331" y="876">X</text>
      </g>
      <g fontFamily="Open Sans, sans-serif" textAnchor="middle">
        <rect x="1738.500" y="734.500" width="29" height="17" rx="4" fill="#e1e1e1" stroke="#8a8a8a" />
        <text x="1753" y="748" fontSize="12" fill="#808080">WCS</text>
        <rect x="1728.500" y="794.500" width="50" height="50" fill="#dcdcdc" stroke="#a6a6a6" />
        <rect x="1739" y="806" width="28" height="27" fill="#cfcfcf" />
        <text x="1753" y="824" fontSize="12" fill="#555">TOP</text>
      </g>
    </svg>
  );
}

const navPaths = [
  ["First", "M2 1v10M10 1v10L4 6z"],
  ["Previous", "M9 1v10L3 6z"],
  ["Next", "M3 1v10l6-5z"],
  ["Last", "M10 1v10M2 1v10l6-5z"],
  ["Add layout", "M6 1v10M1 6h10"],
];

function Viewport() {
  return (
    <main className="flex min-w-0 flex-1 flex-col">
      <div className="relative flex-1 bg-white">
        <Drawing />
        <div className="relative flex gap-1 pt-0.5 pl-1.5 text-[13px] text-black">
          <button>[Top]</button>
          <button>[2D Wireframe]</button>
        </div>
      </div>
      <div className="flex h-4 items-center bg-[#efefef] text-[11px] text-black">
        {navPaths.map(function ([name, d]) {
          return (
            <button key={name} aria-label={name} className="flex h-4 w-[17px] items-center justify-center border-r-2 border-[#a0a0a0]">
              <svg viewBox="0 0 12 12" className="size-2.5">
                <path d={d} stroke="#000" strokeWidth="1.500" />
              </svg>
            </button>
          );
        })}
        <div className="relative ml-1 flex h-4 w-[120px] items-center">
          <svg viewBox="0 0 120 16" className="absolute inset-0 h-4 w-[120px]">
            <path d="M54 0h60l-7 16H47z" fill="#d4d4d4" />
            <path d="M0 0h54l-4 8 3 8H7z" fill="#fff" />
            <path d="M0 0l7 16M54 0l-7 16M51 8l3 8M113 0l-7 16" stroke="#000" fill="none" />
          </svg>
          <button className="relative ml-3 font-bold">Model</button>
          <button className="relative ml-4 text-[#333]">Layout1</button>
        </div>
        <button aria-label="Scroll layouts" className="ml-auto flex h-4 w-4 items-center justify-center border-r-2 border-b-2 border-[#a0a0a0] bg-white">
          <Arrow />
        </button>
      </div>
    </main>
  );
}

function SideTools({ items }: { items: string }) {
  return (
    <div className="flex flex-col items-center border-l border-[#4a5260] bg-[#3c4452] pr-1.5 pb-[13px]">
      <div className="mt-[5px] mb-px flex flex-col gap-px">
        <div className={dotsAcross} />
        <div className={dotsAcross} />
      </div>
      {items.split(" ").map(function (name, i) {
        if (name === "|") return <div key={i} className="my-[3px] h-px w-4 bg-white" />;
        return (
          <button key={i} aria-label={name} className="flex h-[22px] w-6 items-center justify-center">
            <Icon name={name} />
          </button>
        );
      })}
    </div>
  );
}

function SideToolbars() {
  return (
    <div className="flex w-[71px] shrink-0 items-start">
      <div className="w-[35px]">
        <SideTools items="line xline polyline polygon rectangle arc circle revcloud spline ellipse ellipseArc block makeBlock point hatch boundary region table mtext" />
      </div>
      <div className="w-9">
        <SideTools items="erase copyObj mirror offset array move rotate scale stretch trim extend lengthen breakAt breakTwo join chamfer fillet explode" />
        <SideTools items="orderFront orderBack orderAbove orderUnder | orderText orderHatch" />
      </div>
    </div>
  );
}

const history = ["Command: '_PERSPECTIVE", "Enter new value for PERSPECTIVE <OFF>: 0", "Command:", "Opposite corner:"];

function CommandLine() {
  return (
    <div className="flex h-[94px] shrink-0 pr-[3px]">
      <div className="flex w-5 flex-col items-center gap-3 border-l border-[#3c4452] pt-1.5">
        <button aria-label="Close command line">
          <svg viewBox="0 0 10 10" className="size-2.5">
            <path d="M1 1l8 8M9 1L1 9" stroke={W} strokeWidth="2" />
          </svg>
        </button>
        <button aria-label="Command line menu">
          <svg viewBox="0 0 10 6" className="h-1.5 w-2.5">
            <path d="M0 0h10L5 6z" fill={W} />
          </svg>
        </button>
      </div>
      <div className="flex flex-1 flex-col border-t-2 border-l-2 border-[#8a8a8a] bg-[#e5e5e5] font-['DejaVu_Sans_Mono',monospace] text-[13px] text-[#1a1a1a]">
        <div className="flex h-[71px] shrink-0 border-b border-[#a0a0a0]">
          <div className="flex-1 pt-px pl-1 leading-4">
            {history.map(function (entry, i) {
              return <div key={i}>{entry}</div>;
            })}
          </div>
          <div className="flex w-[17px] flex-col items-center border-l border-white bg-[#f0f0f0] py-1.5">
            <svg viewBox="0 0 8 6" className="h-1.5 w-2">
              <path d="M0 5l4-4 4 4" stroke="#555" strokeWidth="2" fill="none" />
            </svg>
            <div className="mt-auto mb-1.5 h-[17px] w-[15px] bg-[#cdcdcd]" />
            <svg viewBox="0 0 8 6" className="h-1.5 w-2">
              <path d="M0 1l4 4 4-4" stroke="#555" strokeWidth="2" fill="none" />
            </svg>
          </div>
        </div>
        <label className="flex flex-1 items-center border-b border-white pt-1 pl-0.5">
          Command:
          <input className="ml-1 min-w-0 flex-1 bg-transparent outline-none" />
        </label>
      </div>
    </div>
  );
}

function Status({ name, active }: { name: string; active?: boolean }) {
  return (
    <button
      aria-label={name}
      className="mt-0.5 flex h-6 w-[30px] shrink-0 justify-center border-r border-[#c9cdd3] pt-px"
    >
      <svg viewBox="0 0 24 24" className={`size-6 ${active ? "bg-[#5f8fc8]" : ""}`}>
        {statusGlyphs[name]}
      </svg>
    </button>
  );
}

function StatusText({ children, width, muted }: { children: string; width: string; muted?: boolean }) {
  return (
    <span
      className={`mt-0.5 flex h-6 shrink-0 items-center border-r border-[#c9cdd3] pl-1 whitespace-nowrap ${width} ${
        muted ? "text-[#8b9097]" : ""
      }`}
    >
      {children}
    </span>
  );
}

function StatusBar() {
  return (
    <footer className="flex h-[18px] shrink-0 items-start overflow-hidden text-[11px] text-white">
      <span className="flex h-7 flex-1 items-center pl-1">Ready</span>
      <div className="mt-0.5 h-6 w-2.5 border-x border-[#c9cdd3]" />
      <svg viewBox="0 0 24 24" className="mt-[3px] size-6">
        {statusGlyphs.ucs}
      </svg>
      <StatusText width="w-[141px]">-10.7444,85.5809,0.0000</StatusText>
      <svg viewBox="0 0 24 24" className="mt-[3px] ml-0.5 size-6">
        {statusGlyphs.scale}
      </svg>
      <StatusText width="w-[22px]">1:1</StatusText>
      <Status name="annoVisible" active />
      <Status name="annoAuto" />
      <Status name="snap" />
      <Status name="grid" />
      <Status name="infer" active />
      <Status name="ortho" active />
      <Status name="polar" />
      <Status name="osnap" active />
      <Status name="otrack" active />
      <Status name="lineweight" />
      <StatusText width="w-11">MODEL</StatusText>
      <Status name="gear" />
      <Status name="light" />
      <Status name="windows" />
      <Status name="gauge" active />
      <StatusText width="w-[72px]" muted>AEC Graphic</StatusText>
      <Status name="track" />
      <Status name="person" />
      <Status name="cascade" active />
      <Status name="list" />
      <StatusText width="w-[31px]" muted>1173</StatusText>
      <svg viewBox="0 0 24 24" className="mt-[3px] mr-2.5 ml-1 size-6">
        {statusGlyphs.mail}
      </svg>
    </footer>
  );
}

export default function App() {
  return (
    <div className="flex h-screen flex-col overflow-hidden bg-[#222933] font-['Open_Sans',sans-serif]">
      <TitleBar />
      <TopToolbars />
      <div className="flex min-h-0 flex-1">
        <div className="flex min-w-0 flex-1 flex-col">
          <DocumentTabs />
          <div className="flex min-h-0 flex-1">
            <PropertiesPanel />
            <Viewport />
          </div>
        </div>
        <SideToolbars />
      </div>
      <div className="mb-1 flex h-[30px] w-fit shrink-0 items-center rounded-r-sm border-t border-[#222933] bg-[#3c4452] pr-[17px]">
        <Handle />
        <Tools items="layerFilter layerMake layerPrev layerCheck layerMatch | layerWhat layerIn layerOut layerFreeze layerDim layerThaw layerOff layerDelete layerMerge | layerLock layerUnlock | layersOn layersOff | layersSun layersIce | layersUnlock layersLock | layerUndo layerWalk" />
        <div className="w-[17px]" />
        <Handle />
        <Tools items="titleBlock | globe | shp | image clip | contour pdf | ifc earth pdf3d | refresh nodes profile | survey sections cutFill slope" />
      </div>
      <CommandLine />
      <StatusBar />
      <div className="flex h-0.5 shrink-0 bg-[#2a2324]">
        <div className="ml-12 w-72 bg-[#e6e6e6]" />
        <div className="ml-[316px] w-12 bg-[#555]" />
      </div>
    </div>
  );
}
